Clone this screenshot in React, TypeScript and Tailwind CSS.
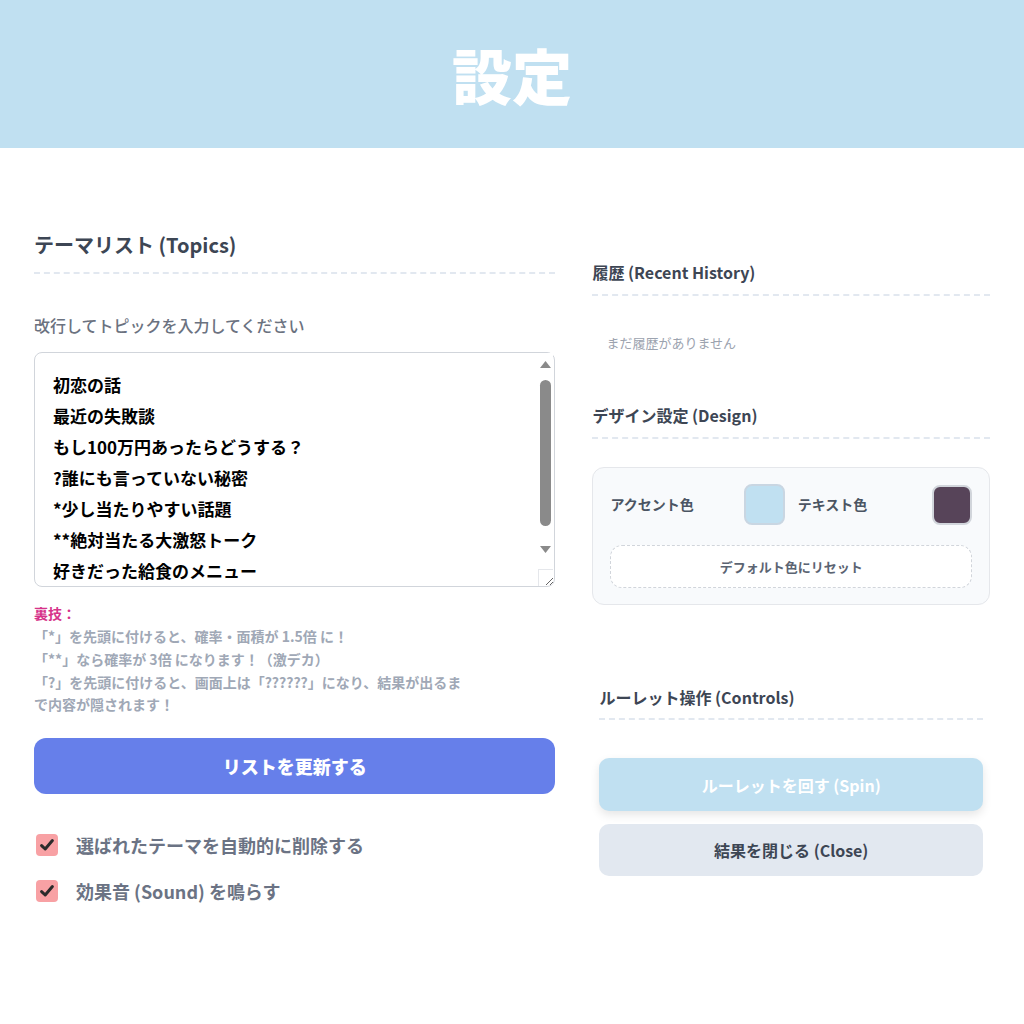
import React from "react";

const topics = [
  "初恋の話",
  "最近の失敗談",
  "もし100万円あったらどうする？",
  "?誰にも言っていない秘密",
  "*少し当たりやすい話題",
  "**絶対当たる大激怒トーク",
  "好きだった給食のメニュー",
  "子供の頃の夢",
  "最近ハマっていること",
  "行ってみたい国",
].join("\n");

function Check() {
  return (
    <span className="flex h-[22px] w-[22px] items-center justify-center rounded-[4px] bg-[#f8a1a4]">
      <svg width="16" height="16" viewBox="0 0 16 16">
        <path d="M2.6 8.6 L6.2 12 L13.4 3.6" fill="none" stroke="#2b2b2b" strokeWidth="3" strokeLinecap="round" strokeLinejoin="round" />
      </svg>
    </span>
  );
}

export default function App() {
  const font = { fontFamily: '"Noto Sans CJK JP", "Noto Sans", sans-serif' };
  return (
    <div className="min-h-[1024px] w-[1024px] bg-white" style={font}>
      <header className="flex h-[148px] items-center justify-center bg-[#c0e0f1]">
        <h1 className="text-[60px] font-black leading-none text-white">設定</h1>
      </header>
      <main className="flex gap-[37px] px-[34px] pt-[83px]">
        {/* Left column */}
        <section className="w-[522px]">
          <h2 className="border-b-2 border-dashed border-[#e2e8f0] pb-[13px] text-[20px] font-bold leading-[28px] text-[#3d4654]">
            テーマリスト (Topics)
          </h2>
          <p className="mt-[39px] text-[16px] font-medium leading-[24px] text-[#6b7280]">
            改行してトピックを入力してください
          </p>
          <div className="relative mt-[15px]">
            <textarea
              className="block h-[235px] w-full resize-y overflow-hidden rounded-[8px] border border-[#d1d5db] bg-white py-[16px] pl-[18px] pr-[22px] text-[17px] font-bold leading-[31px] text-black outline-none"
              defaultValue={topics}
              style={font}
            />
            <div className="pointer-events-none absolute right-[2px] top-[1px] flex h-[216px] w-[15px] flex-col items-center bg-white">
              <svg className="mt-[8px]" width="11" height="7" viewBox="0 0 11 7">
                <path d="M5.5 0 L11 7 L0 7 Z" fill="#8a8a8a" />
              </svg>
              <span className="mt-[12px] h-[146px] w-[11px] rounded-full bg-[#8a8a8a]" />
              <svg className="mt-[20px]" width="11" height="7" viewBox="0 0 11 7">
                <path d="M0 0 L11 0 L5.5 7 Z" fill="#8a8a8a" />
              </svg>
            </div>
            <div className="pointer-events-none absolute bottom-[1px] right-[2px] h-[17px] w-[15px] border-l border-t border-[#e5e7eb]" />
          </div>
          <div className="mt-[15px] text-[14px] font-bold leading-[23px] text-[#a0a8b6]">
            <p className="text-[#d6338a]">裏技：</p>
            <p>「*」を先頭に付けると、確率・面積が 1.5倍 に！</p>
            <p>「**」なら確率が 3倍 になります！（激デカ）</p>
            <p className="leading-[22px]">
              「?」を先頭に付けると、画面上は「??????」になり、結果が出るま
              <br />
              で内容が隠されます！
            </p>
          </div>
          <button className="mt-[23px] flex h-[56px] w-full items-center justify-center rounded-[12px] bg-[#667fea] text-[18px] font-black text-white">
            リストを更新する
          </button>
          <div className="mt-[37px] flex flex-col gap-[18px] pl-[2px]">
            <label className="flex h-[28px] items-center gap-[18px] text-[18px] font-bold text-[#6b7384]">
              <Check />
              選ばれたテーマを自動的に削除する
            </label>
            <label className="flex h-[28px] items-center gap-[18px] text-[18px] font-bold text-[#6b7384]">
              <Check />
              効果音 (Sound) を鳴らす
            </label>
          </div>
        </section>

        {/* Right column */}
        <section className="w-[398px] pt-[29px]">
          <h3 className="border-b-2 border-dashed border-[#e2e8f0] pb-[10px] text-[16px] font-bold leading-[24px] text-[#3d4654]">
            履歴 (Recent History)
          </h3>
          <p className="mt-[37px] pl-[14px] text-[13px] leading-[20px] text-[#9ca3af]">まだ履歴がありません</p>
          <h3 className="mt-[50px] border-b-2 border-dashed border-[#e2e8f0] pb-[10px] text-[16px] font-bold leading-[24px] text-[#3d4654]">
            デザイン設定 (Design)
          </h3>
          <div className="mt-[28px] rounded-[12px] border border-[#e5e7eb] bg-[#f8fafc] px-[17px] pb-[16px] pt-[16px]">
            <div className="flex gap-[13px]">
              <div className="flex flex-1 items-center justify-between">
                <span className="text-[14px] font-bold text-[#4b5563]">アクセント色</span>
                <span className="h-[41px] w-[41px] rounded-[8px] border-2 border-[#c9d6e2] bg-[#c0e0f1]" />
              </div>
              <div className="flex flex-1 items-center justify-between">
                <span className="text-[14px] font-bold text-[#4b5563]">テキスト色</span>
                <span className="h-[40px] w-[40px] rounded-[8px] border-2 border-[#d1d5db] bg-[#574459]" />
              </div>
            </div>
            <button className="mt-[20px] flex h-[43px] w-full items-center justify-center rounded-[12px] border border-dashed border-[#d1d5db] bg-white text-[13px] font-bold text-[#5b6472]">
              デフォルト色にリセット
            </button>
          </div>
          <div className="px-[7px]">
            <h3 className="mt-[80px] border-b-2 border-dashed border-[#e2e8f0] pb-[9px] text-[16px] font-bold leading-[24px] text-[#3d4654]">
              ルーレット操作 (Controls)
            </h3>
            <button className="mt-[38px] flex h-[53px] w-full items-center justify-center rounded-[10px] bg-[#c0e0f1] text-[16px] font-bold text-white shadow-[0_4px_10px_rgba(0,0,0,0.10)]">
              ルーレットを回す (Spin)
            </button>
            <button className="mt-[13px] flex h-[52px] w-full items-center justify-center rounded-[10px] bg-[#e2e8f0] text-[16px] font-bold text-[#3d4654]">
              結果を閉じる (Close)
            </button>
          </div>
        </section>
      </main>
    </div>
  );
}
